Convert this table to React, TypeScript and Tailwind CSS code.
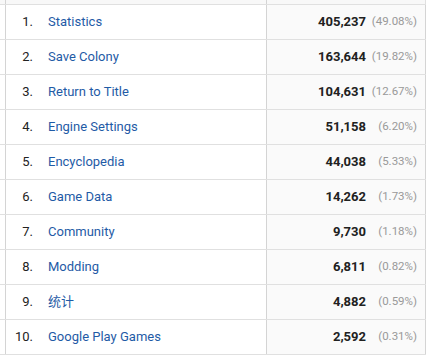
import React from 'react';

const rows = [
  { label: 'Statistics', value: '405,237', pct: '(49.08%)' },
  { label: 'Save Colony', value: '163,644', pct: '(19.82%)' },
  { label: 'Return to Title', value: '104,631', pct: '(12.67%)' },
  { label: 'Engine Settings', value: '51,158', pct: '(6.20%)' },
  { label: 'Encyclopedia', value: '44,038', pct: '(5.33%)' },
  { label: 'Game Data', value: '14,262', pct: '(1.73%)' },
  { label: 'Community', value: '9,730', pct: '(1.18%)' },
  { label: 'Modding', value: '6,811', pct: '(0.82%)' },
  { label: '统计', value: '4,882', pct: '(0.59%)' },
  { label: 'Google Play Games', value: '2,592', pct: '(0.31%)' },
];

const App: React.FC = () => {
  return (
    <div
      className="w-[430px] h-[361px] bg-white overflow-hidden"
      style={{ fontFamily: 'Roboto, "Noto Sans CJK SC", sans-serif' }}
    >
      {/* tail of the previous row */}
      <div className="flex w-[426px] h-[5px] border-b border-r border-[#e0e0e0] bg-[#f8f8f8]">
        <div className="w-[5px]" />
        <div className="w-[261px] border-l border-[#d4d4d4]" />
        <div className="flex-1 border-l border-[#d4d4d4]" />
      </div>

      {rows.map((row, i) => (
        <div key={i} className="flex w-[426px] h-[35px] border-b border-[#e0e0e0]">
          <div className="w-[5px]" />
          <div className="w-[261px] flex items-center border-l border-[#d4d4d4] text-[13px]">
            <span className="w-[27px] text-right text-[#222]">{i + 1}.</span>
            <span className="ml-[15px] text-[#1f5ba6]">{row.label}</span>
          </div>
          <div className="flex-1 flex items-center justify-end border-l border-r border-[#d4d4d4] bg-[#fafafa] pr-[8px]">
            <span className="text-[13px] font-bold text-[#212121]">{row.value}</span>
            <span className="w-[51px] text-right text-[11.5px] text-[#999]">{row.pct}</span>
          </div>
        </div>
      ))}
    </div>
  );
};

export default App;
